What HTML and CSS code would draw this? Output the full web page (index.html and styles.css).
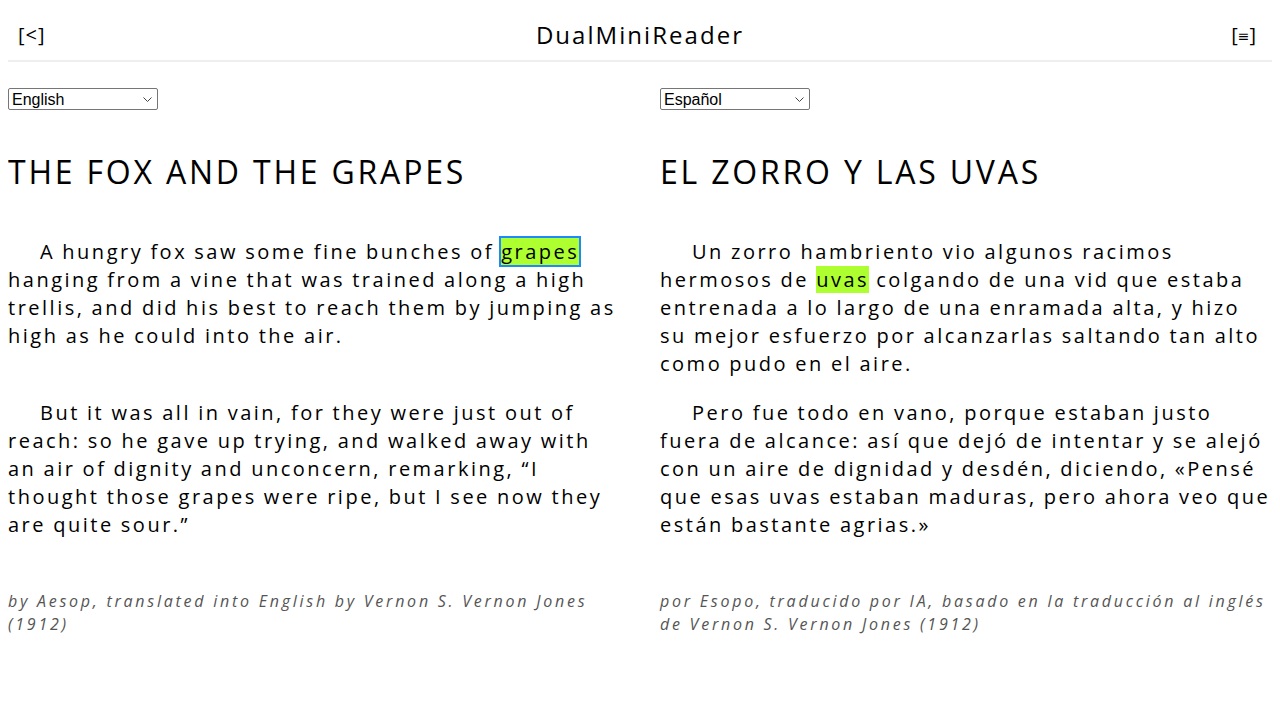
FILE: index.html
```html
<!DOCTYPE html>
<html lang="en">
<head>
<meta charset="utf-8">
<title>DualMiniReader</title>
<link rel="stylesheet" href="styles.css">
</head>
<body>
<header class="topbar">
  <button class="icon-btn icon-left">[&lt;]</button>
  <div class="app-title">DualMiniReader</div>
  <button class="icon-btn icon-right">[<span class="menu-glyph">&#8801;</span>]</button>
</header>
<main class="reader">
  <select class="lang-select"><option>English</option></select>
  <select class="lang-select"><option>Español</option></select>

  <h1 class="story-title">THE FOX AND THE GRAPES</h1>
  <h1 class="story-title">EL ZORRO Y LAS UVAS</h1>

  <p class="para">A hungry fox saw some fine bunches of <span class="hl hl-active">grapes</span> hanging from a vine that was trained along a high trellis, and did his best to reach them by jumping as high as he could into the air.</p>
  <p class="para">Un zorro hambriento vio algunos racimos hermosos de <span class="hl">uvas</span> colgando de una vid que estaba entrenada a lo largo de una enramada alta, y hizo su mejor esfuerzo por alcanzarlas saltando tan alto como pudo en el aire.</p>

  <p class="para">But it was all in vain, for they were just out of reach: so he gave up trying, and walked away with an air of dignity and unconcern, remarking, “I thought those grapes were ripe, but I see now they are quite sour.”</p>
  <p class="para">Pero fue todo en vano, porque estaban justo fuera de alcance: así que dejó de intentar y se alejó con un aire de dignidad y desdén, diciendo, «Pensé que esas uvas estaban maduras, pero ahora veo que están bastante agrias.»</p>

  <p class="credit">by Aesop, translated into English by Vernon S. Vernon Jones (1912)</p>
  <p class="credit">por Esopo, traducido por IA, basado en la traducción al inglés de Vernon S. Vernon Jones (1912)</p>
</main>
</body>
</html>
```
FILE: styles.css
```css
html, body {
  margin: 0;
  padding: 0;
  background: #fff;
}
body {
  margin: 8px;
  font-family: "Open Sans", "Noto Sans", sans-serif;
  color: #000;
}
.topbar {
  display: grid;
  grid-template-columns: 1fr auto 1fr;
  align-items: center;
  height: 52px;
  border-bottom: 2px solid #eeeeee;
  padding: 0 10px;
}
.icon-btn {
  background: none;
  border: none;
  padding: 0;
  font-family: "Open Sans", sans-serif;
  font-size: 20px;
  color: #000;
  letter-spacing: 1px;
}
.icon-left {
  justify-self: start;
}
.icon-right {
  justify-self: end;
  margin-right: 6px;
  letter-spacing: 0;
}
.menu-glyph {
  font-size: 14px;
  font-family: "DejaVu Sans", sans-serif;
  vertical-align: 1px;
}
.app-title {
  font-size: 24px;
  letter-spacing: 2.05px;
}
.reader {
  display: grid;
  grid-template-columns: 1fr 1fr;
  column-gap: 40px;
  align-items: start;
}
.lang-select {
  -webkit-appearance: none;
  appearance: none;
  margin-top: 26px;
  width: 150px;
  height: 22px;
  padding: 0 20px 0 3px;
  border: 1px solid #767676;
  border-radius: 2px;
  background: #fff url("data:image/svg+xml;utf8,<svg xmlns='http://www.w3.org/2000/svg' width='9' height='5' viewBox='0 0 9 5'><path d='M0.5 0.5l4 4 4-4' fill='none' stroke='%23444' stroke-width='1'/></svg>") no-repeat right 5px center;
  color: #000;
  font-family: "Liberation Sans", Arial, sans-serif;
  font-size: 16px;
  justify-self: start;
}
.story-title {
  margin: 43px 0 0;
  font-size: 32px;
  font-weight: 400;
  line-height: 38px;
  letter-spacing: 2.8px;
}
.para {
  margin: 47px 0 0;
  font-size: 20px;
  line-height: 28px;
  letter-spacing: 2.5px;
  word-spacing: -0.5px;
  text-indent: 32px;
}
.para + .para + .para {
  margin-top: 21px;
}
.hl {
  background: #adff2f;
}
.hl-active {
  border: 2px solid #1e88ff;
  margin: 0 -2px;
}
.credit {
  margin: 51px 0 0;
  font-size: 16px;
  line-height: 23px;
  font-style: italic;
  letter-spacing: 2.75px;
  color: #555;
}
```
